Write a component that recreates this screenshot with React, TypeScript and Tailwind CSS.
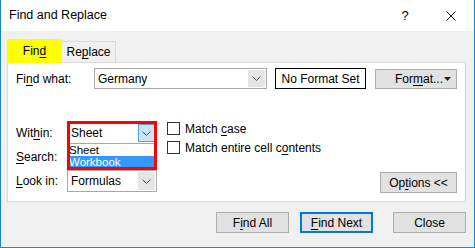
import React from 'react';

const U = ({ children }: { children: React.ReactNode }) => (
  <span className="underline underline-offset-[2px] decoration-1">{children}</span>
);

const Chevron = () => (
  <svg width="9" height="5" viewBox="0 0 9 5" fill="none">
    <polyline points="0.5,0.5 4.5,4.5 8.5,0.5" stroke="#505050" strokeWidth="1" />
  </svg>
);

interface SelectProps {
  value: string;
  active?: boolean;
  width: string;
}

const Select: React.FC<SelectProps> = ({ value, active, width }) => (
  <div className={`${width} h-full flex bg-white border border-[#a8a8a8]`}>
    <div className="flex-1 flex items-center pl-[3px]">{value}</div>
    <div
      className={`w-[17px] m-px flex items-center justify-center border ${
        active ? 'bg-[#cce4f7] border-[#569de5]' : 'bg-[#e5e5e5] border-[#e5e5e5]'
      }`}
    >
      <Chevron />
    </div>
  </div>
);

const Button = ({ children, focused, className = '' }: { children: React.ReactNode; focused?: boolean; className?: string }) => (
  <div
    className={`h-[21px] flex items-center justify-center bg-[#e1e1e1] ${
      focused ? 'border-2 border-[#0078d7]' : 'border border-[#adadad]'
    } ${className}`}
  >
    {children}
  </div>
);

const Checkbox = ({ children }: { children: React.ReactNode }) => (
  <div className="flex items-center gap-[5px] h-[13px]">
    <div className="w-[13px] h-[13px] border border-[#333] bg-white" />
    <span>{children}</span>
  </div>
);

export default function App() {
  return (
    <div className="w-[475px] h-[248px] flex flex-col bg-[#f0f0f0] border-x border-b border-[#1883d7] text-[12px] text-black font-['Liberation_Sans',Arial,sans-serif] leading-none">
      {/* Title bar */}
      <div className="h-[31px] shrink-0 bg-white flex items-center">
        <span className="pl-[8px] text-[12.5px]">Find and Replace</span>
        <div className="ml-auto flex h-full">
          <div className="w-[46px] h-full flex items-center justify-center text-[13px]">?</div>
          <div className="w-[46px] h-full flex items-center justify-center">
            <svg width="10" height="10" viewBox="0 0 10 10">
              <path d="M0.5 0.5 L9.5 9.5 M9.5 0.5 L0.5 9.5" stroke="#111" strokeWidth="1" />
            </svg>
          </div>
        </div>
      </div>

      <div className="px-[6px] pt-[8px]">
        {/* Tabs */}
        <div className="h-[23px] flex items-end">
          <div className="w-[55px] h-[24px] -mb-px relative z-10 bg-[#ffff00] flex items-center justify-center">
            Fin<U>d</U>
          </div>
          <div className="w-[54px] h-[21px] bg-[#f0f0f0] border-t border-r border-[#d9d9d9] flex items-center justify-center">
            Re<U>p</U>lace
          </div>
        </div>

        {/* Panel */}
        <div className="w-[459px] h-[140px] bg-white border border-[#d9d9d9] pt-[5px] pl-[8px] pr-[8px] pb-[8px] flex flex-col">
          <div className="h-[21px] flex items-center">
            <span className="w-[78px]">
              Fi<U>n</U>d what:
            </span>
            <div className="h-full">
              <Select value="Germany" width="w-[173px]" />
            </div>
            <div className="ml-[8px] w-[91px] h-[21px] border border-black flex items-center justify-center">
              No Format Set
            </div>
            <div className="ml-[9px] w-[82px] h-[20px] bg-[#e1e1e1] border border-[#adadad] flex items-center">
              <span className="ml-[19px]">
                For<U>m</U>at...
              </span>
              <svg className="ml-auto mr-[5px]" width="7" height="4" viewBox="0 0 7 4">
                <polygon points="0,0 7,0 3.5,4" fill="#222" />
              </svg>
            </div>
          </div>

          <div className="mt-[33px] flex flex-1">
            {/* Labels + selects */}
            <div className="grid grid-cols-[51px_90px] auto-rows-[22px] gap-y-[2px] items-center">
              <span>
                Wit<U>h</U>in:
              </span>
              <div className="relative h-full">
                <Select value="Sheet" active width="w-[90px]" />
                <div className="absolute left-0 top-full w-[90px] h-[24px] bg-white flex flex-col z-10 text-[11.5px]">
                  <div className="h-[12px] leading-[12px] pl-[2px]">Sheet</div>
                  <div className="h-[12px] leading-[12px] mx-[2px] bg-[#3399ff] text-white">Workbook</div>
                </div>
                <div className="absolute left-0 -top-px w-[90px] h-[49px] border-[3px] border-[#ff0000] z-20 pointer-events-none" />
              </div>

              <span>
                <U>S</U>earch:
              </span>
              <div className="h-full">
                <Select value="" width="w-[90px]" />
              </div>

              <span>
                <U>L</U>ook in:
              </span>
              <div className="h-full">
                <Select value="Formulas" width="w-[90px]" />
              </div>
            </div>

            {/* Checkboxes */}
            <div className="ml-[10px] flex flex-col gap-[6px]">
              <Checkbox>
                Match <U>c</U>ase
              </Checkbox>
              <Checkbox>
                Match entire cell c<U>o</U>ntents
              </Checkbox>
            </div>

            <Button className="ml-auto self-end w-[77px]">
              Op<U>t</U>ions &lt;&lt;
            </Button>
          </div>
        </div>
      </div>

      {/* Bottom buttons */}
      <div className="mt-[10px] flex justify-end pr-[8px]">
        <Button className="w-[73px]">
          F<U>i</U>nd All
        </Button>
        <Button focused className="w-[73px] ml-[11px]">
          <U>F</U>ind Next
        </Button>
        <Button className="w-[73px] ml-[20px]">Close</Button>
      </div>
    </div>
  );
}
